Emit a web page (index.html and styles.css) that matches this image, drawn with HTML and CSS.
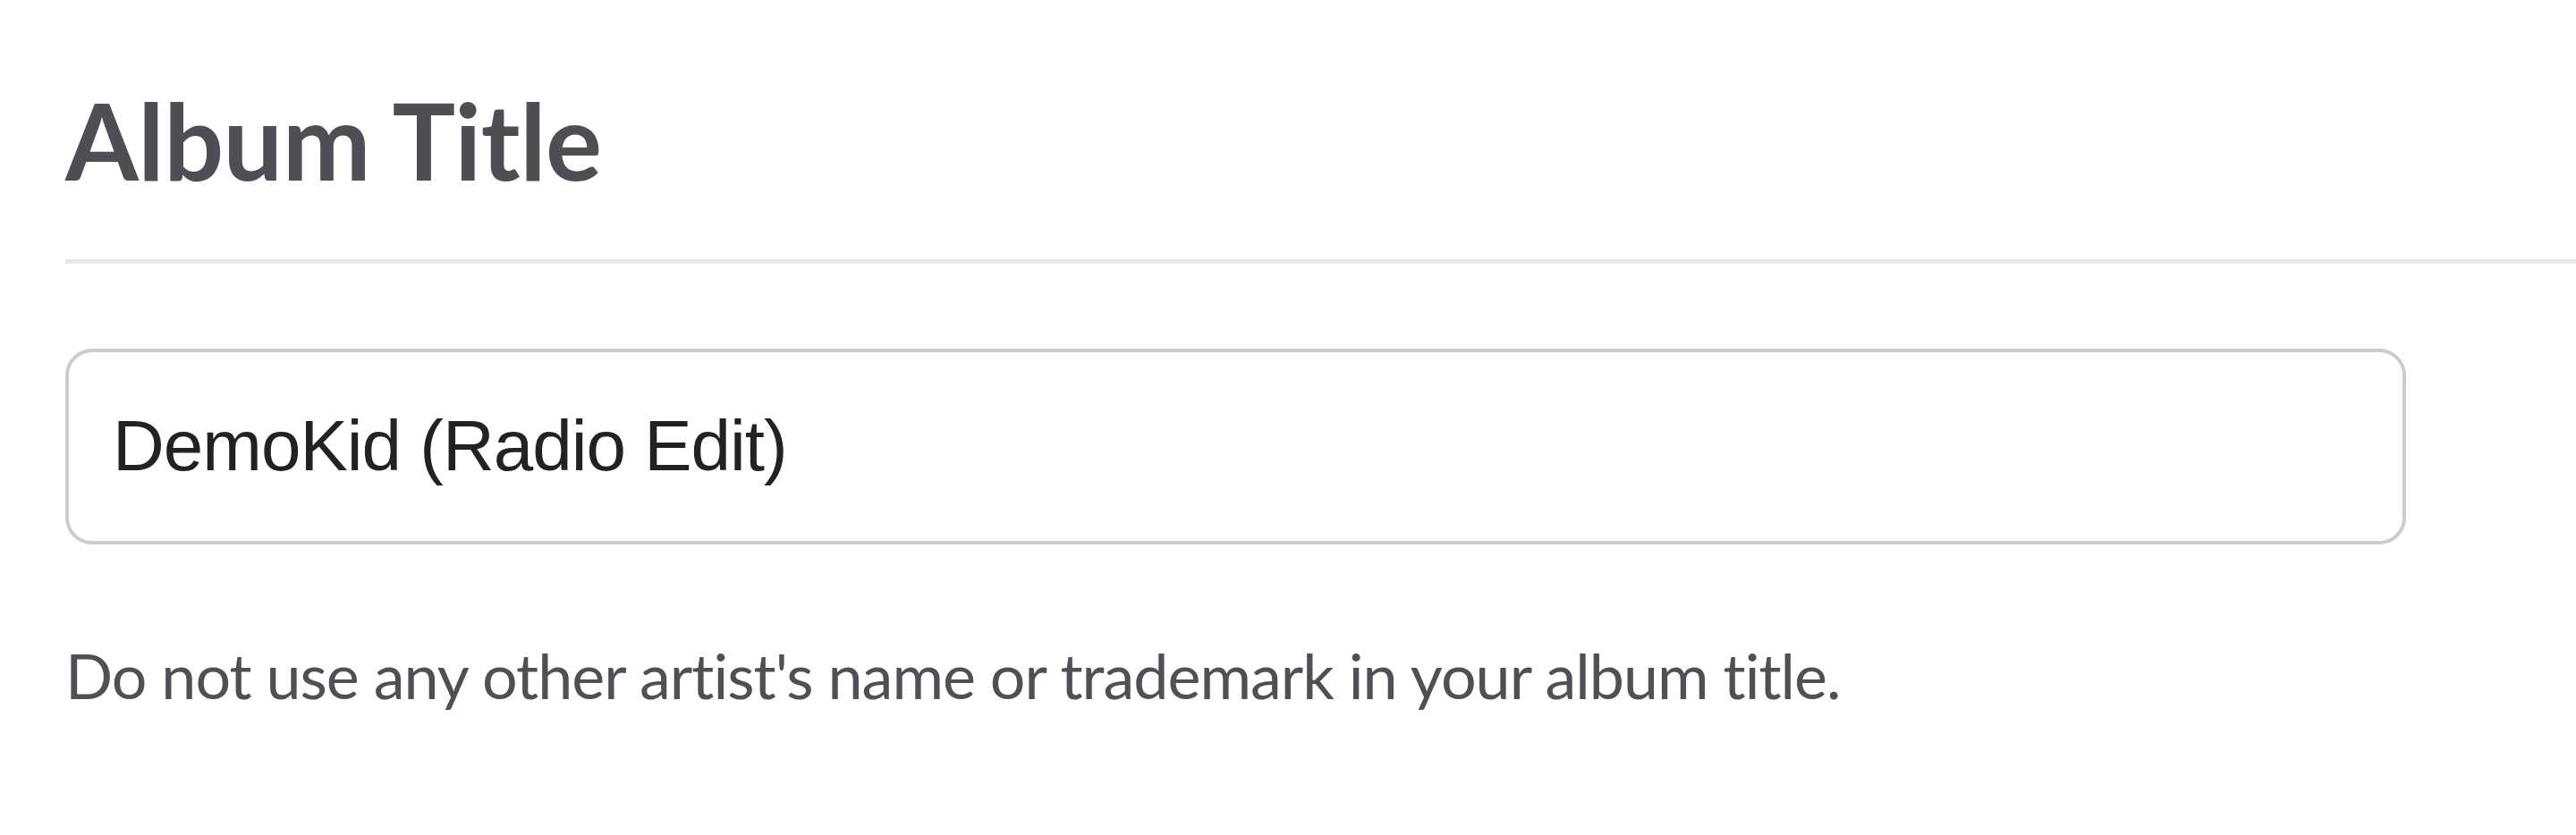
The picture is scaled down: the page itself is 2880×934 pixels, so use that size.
FILE: index.html
```html
<!DOCTYPE html>
<html lang="en">
<head>
<meta charset="utf-8">
<title>Album Title</title>
<link rel="stylesheet" href="styles.css">
</head>
<body>
<main class="section">
  <h1 class="section-title">Album Title</h1>
  <hr class="divider">
  <div class="field" role="textbox">DemoKid (Radio Edit)</div>
  <p class="hint">Do not use any other artist's name or trademark in your album title.</p>
</main>
</body>
</html>
```
FILE: styles.css
```css
html, body {
  margin: 0;
  padding: 0;
  background: #ffffff;
}

.section {
  padding: 86px 0 0 73px;
  font-family: "Lato", "Liberation Sans", sans-serif;
  font-variant-ligatures: none;
}

.section-title {
  margin: 0;
  font-family: "Lato", sans-serif;
  font-weight: 700;
  font-size: 118px;
  line-height: 1.2;
  letter-spacing: -0.5px;
  color: #4e4f55;
}

.divider {
  margin: 62px 0 0 0;
  border: 0;
  height: 5px;
  background: #e8e8ec;
}

.field {
  margin-top: 95px;
  box-sizing: border-box;
  width: 2617px;
  height: 219px;
  border: 4px solid #cccccc;
  border-radius: 30px;
  display: flex;
  align-items: center;
  padding: 0 49px;
  font-family: "Liberation Sans", Arial, sans-serif;
  font-size: 80px;
  letter-spacing: -1px;
  color: #222222;
}

.hint {
  margin: 104px 0 0 0;
  font-family: "Lato", sans-serif;
  font-weight: 400;
  font-size: 70px;
  line-height: 1.2;
  letter-spacing: -1px;
  color: #4f5056;
}
```
